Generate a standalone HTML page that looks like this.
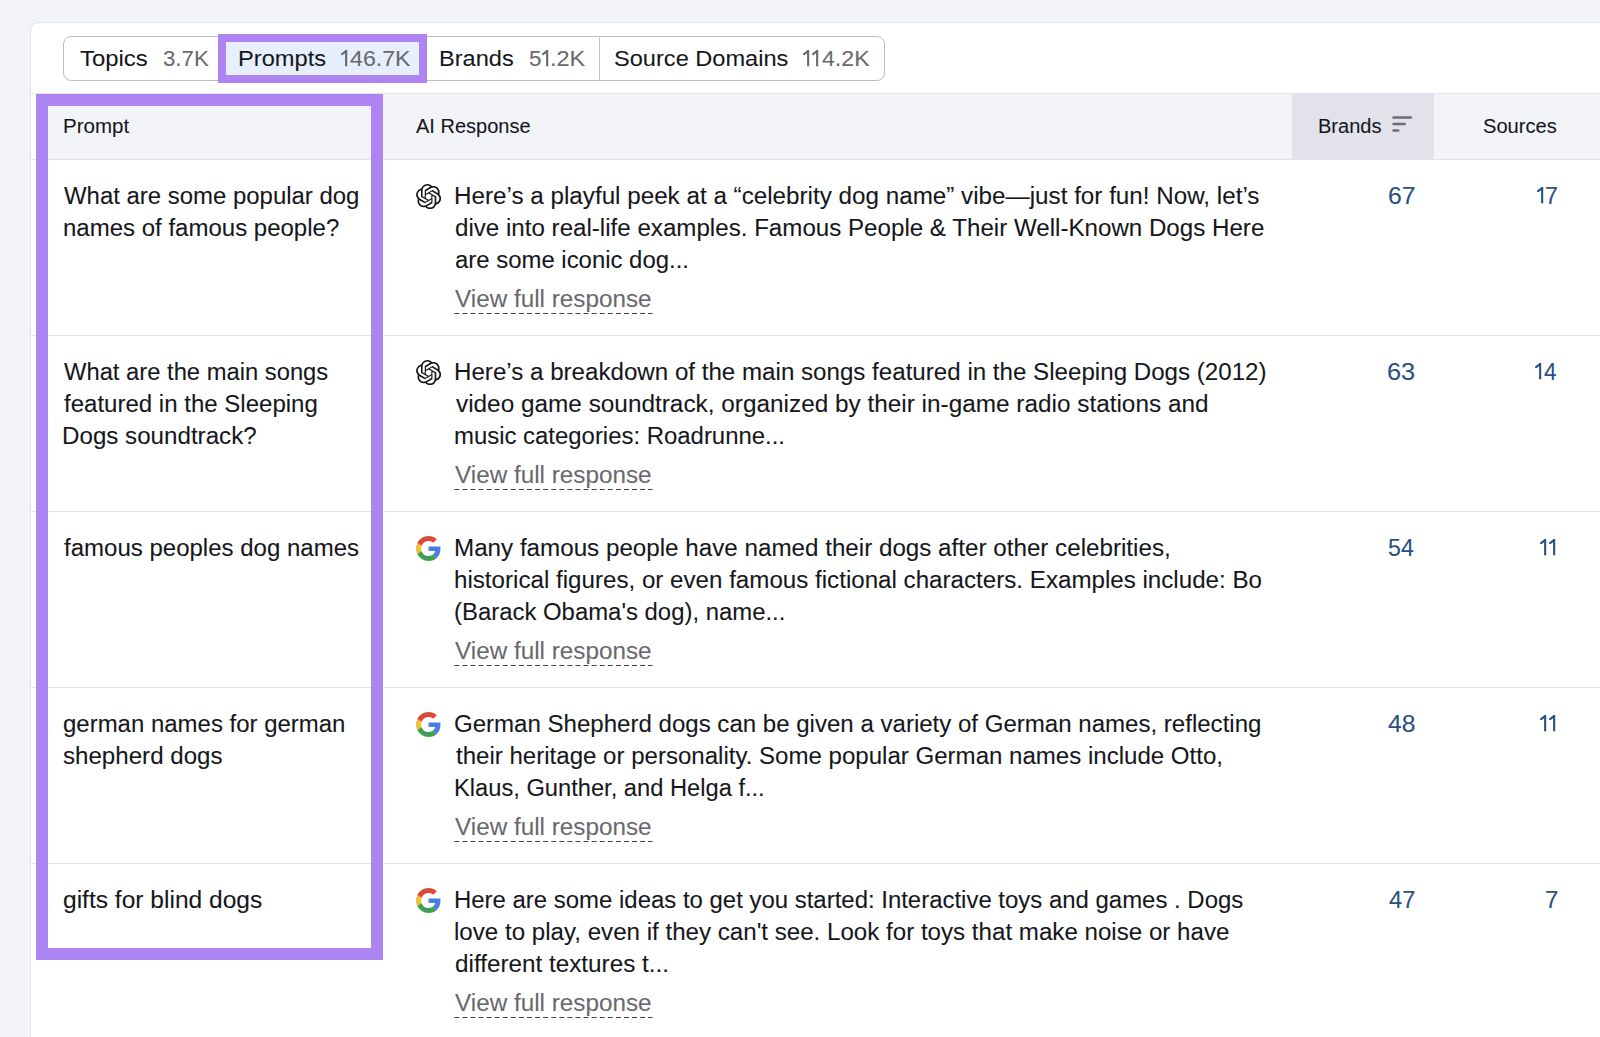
<!DOCTYPE html>
<html><head><meta charset="utf-8"><style>
html,body{margin:0;padding:0}
body{width:1600px;height:1037px;overflow:hidden;position:relative;background:#f3f4f8;font-family:"Liberation Sans",sans-serif}
.a{position:absolute}
.t{position:absolute;white-space:pre;line-height:1;transform-origin:0 0;-webkit-text-stroke:0.08px currentColor}
</style></head><body>

<div class="a" style="left:30px;top:22px;width:1600px;height:1100px;background:#fff;border:1px solid #e2e3e9;border-radius:8px;box-sizing:border-box"></div>
<div class="a" style="left:63px;top:36px;width:822px;height:45px;border:1px solid #bdbec2;border-radius:8px;box-sizing:border-box"></div>
<div class="a" style="left:599px;top:37px;width:1px;height:43px;background:#c4c5c9"></div>
<div class="a" style="left:218px;top:34px;width:209px;height:49px;border:8px solid #ae84f3;box-sizing:border-box;background:#e6effb"></div>
<div class="a" style="left:31px;top:93px;width:1569px;height:67px;background:linear-gradient(90deg,#fff 0 5px,#f3f4f8 5px);border-top:1px solid #e2e3e9;border-bottom:1px solid #e2e3e9;box-sizing:border-box"></div>
<div class="a" style="left:1292px;top:94px;width:142px;height:65px;background:#e1e2ea"></div>
<svg class="a" style="left:1390px;top:114px" width="24" height="20" viewBox="0 0 24 20"><g stroke="#6b6c7b" stroke-width="2.6" stroke-linecap="round"><line x1="3.6" y1="3.5" x2="20.8" y2="3.5"/><line x1="3.6" y1="10" x2="14.6" y2="10"/><line x1="3.6" y1="16.5" x2="8.2" y2="16.5"/></g></svg>
<div class="a" style="left:31px;top:335px;width:1569px;height:1px;background:#e2e3e9"></div>
<div class="a" style="left:31px;top:511px;width:1569px;height:1px;background:#e2e3e9"></div>
<div class="a" style="left:31px;top:687px;width:1569px;height:1px;background:#e2e3e9"></div>
<div class="a" style="left:31px;top:863px;width:1569px;height:1px;background:#e2e3e9"></div>
<svg style="position:absolute;left:415.6px;top:183.6px" width="25.2" height="25.2" viewBox="0 0 24 24"><path fill="#16171c" d="M22.2819 9.8211a5.9847 5.9847 0 0 0-.5157-4.9108 6.0462 6.0462 0 0 0-6.5098-2.9A6.0651 6.0651 0 0 0 4.9807 4.1818a5.9847 5.9847 0 0 0-3.9977 2.9 6.0462 6.0462 0 0 0 .7427 7.0966 5.98 5.98 0 0 0 .511 4.9107 6.051 6.051 0 0 0 6.5146 2.9001A5.9847 5.9847 0 0 0 13.2599 24a6.0557 6.0557 0 0 0 5.7718-4.2058 5.9894 5.9894 0 0 0 3.9977-2.9001 6.0557 6.0557 0 0 0-.7475-7.0729zm-9.022 12.6081a4.4755 4.4755 0 0 1-2.8764-1.0408l.1419-.0804 4.7783-2.7582a.7948.7948 0 0 0 .3927-.6813v-6.7369l2.02 1.1686a.071.071 0 0 1 .038.052v5.5826a4.504 4.504 0 0 1-4.4945 4.4944zm-9.6607-4.1254a4.4708 4.4708 0 0 1-.5346-3.0137l.142.0852 4.783 2.7582a.7712.7712 0 0 0 .7806 0l5.8428-3.3685v2.3324a.0804.0804 0 0 1-.0332.0615L9.74 19.9502a4.4992 4.4992 0 0 1-6.1408-1.6464zM2.3408 7.8956a4.485 4.485 0 0 1 2.3655-1.9728V11.6a.7664.7664 0 0 0 .3879.6765l5.8144 3.3543-2.0201 1.1685a.0757.0757 0 0 1-.071 0l-4.8303-2.7865A4.504 4.504 0 0 1 2.3408 7.872zm16.5963 3.8558L13.1038 8.364 15.1192 7.2a.0757.0757 0 0 1 .071 0l4.8303 2.7913a4.4944 4.4944 0 0 1-.6765 8.1042v-5.6772a.79.79 0 0 0-.407-.667zm2.0107-3.0231l-.142-.0852-4.7735-2.7818a.7759.7759 0 0 0-.7854 0L9.409 9.2297V6.8974a.0662.0662 0 0 1 .0284-.0615l4.8303-2.7866a4.4992 4.4992 0 0 1 6.6802 4.66zM8.3065 12.863l-2.02-1.1638a.0804.0804 0 0 1-.038-.0567V6.0742a4.4992 4.4992 0 0 1 7.3757-3.4537l-.142.0805L8.704 5.459a.7948.7948 0 0 0-.3927.6813zm1.0976-2.3654l2.602-1.4998 2.6069 1.4998v2.9994l-2.5974 1.4997-2.6067-1.4997Z"/></svg>
<svg class="a" style="left:454px;top:312px" width="200" height="3"><line x1="0.3" y1="1.5" x2="198.5" y2="1.5" stroke="#3f4045" stroke-width="1.1" stroke-dasharray="4.9 3.18"/></svg>
<svg style="position:absolute;left:415.6px;top:359.6px" width="25.2" height="25.2" viewBox="0 0 24 24"><path fill="#16171c" d="M22.2819 9.8211a5.9847 5.9847 0 0 0-.5157-4.9108 6.0462 6.0462 0 0 0-6.5098-2.9A6.0651 6.0651 0 0 0 4.9807 4.1818a5.9847 5.9847 0 0 0-3.9977 2.9 6.0462 6.0462 0 0 0 .7427 7.0966 5.98 5.98 0 0 0 .511 4.9107 6.051 6.051 0 0 0 6.5146 2.9001A5.9847 5.9847 0 0 0 13.2599 24a6.0557 6.0557 0 0 0 5.7718-4.2058 5.9894 5.9894 0 0 0 3.9977-2.9001 6.0557 6.0557 0 0 0-.7475-7.0729zm-9.022 12.6081a4.4755 4.4755 0 0 1-2.8764-1.0408l.1419-.0804 4.7783-2.7582a.7948.7948 0 0 0 .3927-.6813v-6.7369l2.02 1.1686a.071.071 0 0 1 .038.052v5.5826a4.504 4.504 0 0 1-4.4945 4.4944zm-9.6607-4.1254a4.4708 4.4708 0 0 1-.5346-3.0137l.142.0852 4.783 2.7582a.7712.7712 0 0 0 .7806 0l5.8428-3.3685v2.3324a.0804.0804 0 0 1-.0332.0615L9.74 19.9502a4.4992 4.4992 0 0 1-6.1408-1.6464zM2.3408 7.8956a4.485 4.485 0 0 1 2.3655-1.9728V11.6a.7664.7664 0 0 0 .3879.6765l5.8144 3.3543-2.0201 1.1685a.0757.0757 0 0 1-.071 0l-4.8303-2.7865A4.504 4.504 0 0 1 2.3408 7.872zm16.5963 3.8558L13.1038 8.364 15.1192 7.2a.0757.0757 0 0 1 .071 0l4.8303 2.7913a4.4944 4.4944 0 0 1-.6765 8.1042v-5.6772a.79.79 0 0 0-.407-.667zm2.0107-3.0231l-.142-.0852-4.7735-2.7818a.7759.7759 0 0 0-.7854 0L9.409 9.2297V6.8974a.0662.0662 0 0 1 .0284-.0615l4.8303-2.7866a4.4992 4.4992 0 0 1 6.6802 4.66zM8.3065 12.863l-2.02-1.1638a.0804.0804 0 0 1-.038-.0567V6.0742a4.4992 4.4992 0 0 1 7.3757-3.4537l-.142.0805L8.704 5.459a.7948.7948 0 0 0-.3927.6813zm1.0976-2.3654l2.602-1.4998 2.6069 1.4998v2.9994l-2.5974 1.4997-2.6067-1.4997Z"/></svg>
<svg class="a" style="left:454px;top:488px" width="200" height="3"><line x1="0.3" y1="1.5" x2="198.5" y2="1.5" stroke="#3f4045" stroke-width="1.1" stroke-dasharray="4.9 3.18"/></svg>
<svg style="position:absolute;left:416px;top:536px" width="25" height="25" viewBox="0 0 48 48"><path fill="#dc4a3b" d="M24 9.5c3.54 0 6.71 1.22 9.21 3.6l6.85-6.85C35.9 2.38 30.47 0 24 0 14.62 0 6.51 5.38 2.56 13.22l7.98 6.19C12.43 13.72 17.74 9.5 24 9.5z"/><path fill="#4a7fe0" d="M46.98 24.55c0-1.57-.15-3.09-.38-4.55H24v9.02h12.94c-.58 2.96-2.26 5.48-4.78 7.18l7.73 6c4.51-4.18 7.09-10.36 7.09-17.65z"/><path fill="#f0bd3c" d="M10.53 28.59c-.48-1.45-.76-2.99-.76-4.59s.27-3.14.76-4.59l-7.98-6.19C.92 16.46 0 20.12 0 24c0 3.88.92 7.54 2.56 10.78l7.97-6.19z"/><path fill="#3f9f53" d="M24 48c6.48 0 11.93-2.13 15.89-5.81l-7.73-6c-2.15 1.45-4.92 2.3-8.16 2.3-6.26 0-11.57-4.22-13.47-9.91l-7.98 6.19C6.51 42.62 14.62 48 24 48z"/></svg>
<svg class="a" style="left:454px;top:664px" width="200" height="3"><line x1="0.3" y1="1.5" x2="198.5" y2="1.5" stroke="#3f4045" stroke-width="1.1" stroke-dasharray="4.9 3.18"/></svg>
<svg style="position:absolute;left:416px;top:712px" width="25" height="25" viewBox="0 0 48 48"><path fill="#dc4a3b" d="M24 9.5c3.54 0 6.71 1.22 9.21 3.6l6.85-6.85C35.9 2.38 30.47 0 24 0 14.62 0 6.51 5.38 2.56 13.22l7.98 6.19C12.43 13.72 17.74 9.5 24 9.5z"/><path fill="#4a7fe0" d="M46.98 24.55c0-1.57-.15-3.09-.38-4.55H24v9.02h12.94c-.58 2.96-2.26 5.48-4.78 7.18l7.73 6c4.51-4.18 7.09-10.36 7.09-17.65z"/><path fill="#f0bd3c" d="M10.53 28.59c-.48-1.45-.76-2.99-.76-4.59s.27-3.14.76-4.59l-7.98-6.19C.92 16.46 0 20.12 0 24c0 3.88.92 7.54 2.56 10.78l7.97-6.19z"/><path fill="#3f9f53" d="M24 48c6.48 0 11.93-2.13 15.89-5.81l-7.73-6c-2.15 1.45-4.92 2.3-8.16 2.3-6.26 0-11.57-4.22-13.47-9.91l-7.98 6.19C6.51 42.62 14.62 48 24 48z"/></svg>
<svg class="a" style="left:454px;top:840px" width="200" height="3"><line x1="0.3" y1="1.5" x2="198.5" y2="1.5" stroke="#3f4045" stroke-width="1.1" stroke-dasharray="4.9 3.18"/></svg>
<svg style="position:absolute;left:416px;top:888px" width="25" height="25" viewBox="0 0 48 48"><path fill="#dc4a3b" d="M24 9.5c3.54 0 6.71 1.22 9.21 3.6l6.85-6.85C35.9 2.38 30.47 0 24 0 14.62 0 6.51 5.38 2.56 13.22l7.98 6.19C12.43 13.72 17.74 9.5 24 9.5z"/><path fill="#4a7fe0" d="M46.98 24.55c0-1.57-.15-3.09-.38-4.55H24v9.02h12.94c-.58 2.96-2.26 5.48-4.78 7.18l7.73 6c4.51-4.18 7.09-10.36 7.09-17.65z"/><path fill="#f0bd3c" d="M10.53 28.59c-.48-1.45-.76-2.99-.76-4.59s.27-3.14.76-4.59l-7.98-6.19C.92 16.46 0 20.12 0 24c0 3.88.92 7.54 2.56 10.78l7.97-6.19z"/><path fill="#3f9f53" d="M24 48c6.48 0 11.93-2.13 15.89-5.81l-7.73-6c-2.15 1.45-4.92 2.3-8.16 2.3-6.26 0-11.57-4.22-13.47-9.91l-7.98 6.19C6.51 42.62 14.62 48 24 48z"/></svg>
<svg class="a" style="left:454px;top:1016px" width="200" height="3"><line x1="0.3" y1="1.5" x2="198.5" y2="1.5" stroke="#3f4045" stroke-width="1.1" stroke-dasharray="4.9 3.18"/></svg>
<div class="t" style="left:80.00px;top:48.00px;font-size:22.5px;transform:scaleX(1.0626);color:#16171c">Topics</div>
<div class="t" style="left:163.00px;top:48.00px;font-size:22.5px;transform:scaleX(0.9886);color:#68696f">3.7K</div>
<div class="t" style="left:237.70px;top:48.00px;font-size:22.5px;transform:scaleX(1.0513);color:#16171c">Prompts</div>
<div class="t" style="left:349.75px;top:48.00px;font-size:22.5px;transform:scaleX(1.0291);color:#68696f">46.7K</div>
<div class="t" style="left:438.95px;top:48.00px;font-size:22.5px;transform:scaleX(1.0480);color:#16171c">Brands</div>
<div class="t" style="left:528.90px;top:48.00px;font-size:22.5px;letter-spacing:-1.700px;color:#68696f">5</div>
<div class="t" style="left:549.71px;top:48.00px;font-size:22.5px;transform:scaleX(1.0452);color:#68696f">.2K</div>
<div class="t" style="left:613.85px;top:48.00px;font-size:22.5px;transform:scaleX(1.0486);color:#16171c">Source Domains</div>
<div class="t" style="left:822.00px;top:48.00px;font-size:22.5px;transform:scaleX(1.0286);color:#68696f">4.2K</div>
<div class="t" style="left:62.95px;top:117.00px;font-size:19.5px;transform:scaleX(1.0523);color:#16171c">Prompt</div>
<div class="t" style="left:416.00px;top:117.00px;font-size:19.5px;transform:scaleX(1.0261);color:#16171c">AI Response</div>
<div class="t" style="left:1317.77px;top:117.00px;font-size:19.5px;transform:scaleX(1.0273);color:#16171c">Brands</div>
<div class="t" style="left:1483.00px;top:117.00px;font-size:19.5px;transform:scaleX(1.0309);color:#16171c">Sources</div>
<div class="t" style="left:64.00px;top:185.00px;font-size:23px;transform:scaleX(1.0409);color:#16171c">What are some popular dog</div>
<div class="t" style="left:62.96px;top:217.00px;font-size:23px;transform:scaleX(1.0438);color:#16171c">names of famous people?</div>
<div class="t" style="left:454.45px;top:185.00px;font-size:23px;transform:scaleX(1.0530);color:#16171c">Here’s a playful peek at a “celebrity dog name” vibe—just for fun! Now, let’s</div>
<div class="t" style="left:454.60px;top:217.00px;font-size:23px;transform:scaleX(1.0493);color:#16171c">dive into real-life examples. Famous People &amp; Their Well-Known Dogs Here</div>
<div class="t" style="left:454.60px;top:249.00px;font-size:23px;transform:scaleX(1.0397);color:#16171c">are some iconic dog...</div>
<div class="t" style="left:454.50px;top:288.00px;font-size:23px;transform:scaleX(1.0556);color:#68696f">View full response</div>
<div class="t" style="left:64.00px;top:361.00px;font-size:23px;transform:scaleX(1.0334);color:#16171c">What are the main songs</div>
<div class="t" style="left:64.00px;top:393.00px;font-size:23px;transform:scaleX(1.0447);color:#16171c">featured in the Sleeping</div>
<div class="t" style="left:62.35px;top:425.00px;font-size:23px;transform:scaleX(1.0502);color:#16171c">Dogs soundtrack?</div>
<div class="t" style="left:454.45px;top:361.00px;font-size:23px;transform:scaleX(1.0493);color:#16171c">Here’s a breakdown of the main songs featured in the Sleeping Dogs (2012)</div>
<div class="t" style="left:455.50px;top:393.00px;font-size:23px;transform:scaleX(1.0586);color:#16171c">video game soundtrack, organized by their in-game radio stations and</div>
<div class="t" style="left:454.46px;top:425.00px;font-size:23px;transform:scaleX(1.0398);color:#16171c">music categories: Roadrunne...</div>
<div class="t" style="left:454.50px;top:464.00px;font-size:23px;transform:scaleX(1.0556);color:#68696f">View full response</div>
<div class="t" style="left:64.00px;top:537.00px;font-size:23px;transform:scaleX(1.0441);color:#16171c">famous peoples dog names</div>
<div class="t" style="left:454.45px;top:537.00px;font-size:23px;transform:scaleX(1.0518);color:#16171c">Many famous people have named their dogs after other celebrities,</div>
<div class="t" style="left:454.45px;top:569.00px;font-size:23px;transform:scaleX(1.0499);color:#16171c">historical figures, or even famous fictional characters. Examples include: Bo</div>
<div class="t" style="left:454.46px;top:601.00px;font-size:23px;transform:scaleX(1.0393);color:#16171c">(Barack Obama's dog), name...</div>
<div class="t" style="left:454.50px;top:640.00px;font-size:23px;transform:scaleX(1.0556);color:#68696f">View full response</div>
<div class="t" style="left:63.40px;top:713.00px;font-size:23px;transform:scaleX(1.0421);color:#16171c">german names for german</div>
<div class="t" style="left:63.40px;top:745.00px;font-size:23px;transform:scaleX(1.0483);color:#16171c">shepherd dogs</div>
<div class="t" style="left:454.45px;top:713.00px;font-size:23px;transform:scaleX(1.0456);color:#16171c">German Shepherd dogs can be given a variety of German names, reflecting</div>
<div class="t" style="left:455.50px;top:745.00px;font-size:23px;transform:scaleX(1.0458);color:#16171c">their heritage or personality. Some popular German names include Otto,</div>
<div class="t" style="left:454.47px;top:777.00px;font-size:23px;transform:scaleX(1.0297);color:#16171c">Klaus, Gunther, and Helga f...</div>
<div class="t" style="left:454.50px;top:816.00px;font-size:23px;transform:scaleX(1.0556);color:#68696f">View full response</div>
<div class="t" style="left:63.40px;top:889.00px;font-size:23px;transform:scaleX(1.0676);color:#16171c">gifts for blind dogs</div>
<div class="t" style="left:454.46px;top:889.00px;font-size:23px;transform:scaleX(1.0411);color:#16171c">Here are some ideas to get you started: Interactive toys and games . Dogs</div>
<div class="t" style="left:454.45px;top:921.00px;font-size:23px;transform:scaleX(1.0491);color:#16171c">love to play, even if they can't see. Look for toys that make noise or have</div>
<div class="t" style="left:454.60px;top:953.00px;font-size:23px;transform:scaleX(1.0548);color:#16171c">different textures t...</div>
<div class="t" style="left:454.50px;top:992.00px;font-size:23px;transform:scaleX(1.0556);color:#68696f">View full response</div>
<div class="t" style="left:1387.67px;top:185.00px;font-size:23px;transform:scaleX(1.0781);color:#28517f">67</div>
<div class="t" style="left:1386.65px;top:361.00px;font-size:23px;transform:scaleX(1.1033);color:#28517f">63</div>
<div class="t" style="left:1387.75px;top:537.00px;font-size:23px;transform:scaleX(1.0081);color:#28517f">54</div>
<div class="t" style="left:1387.50px;top:713.00px;font-size:23px;transform:scaleX(1.0689);color:#28517f">48</div>
<div class="t" style="left:1388.50px;top:889.00px;font-size:23px;transform:scaleX(1.0286);color:#28517f">47</div>
<div class="t" style="left:1544.99px;top:185.00px;font-size:23px;transform:scaleX(1.0091);color:#28517f">7</div>
<div class="t" style="left:1544.20px;top:361.00px;font-size:23px;transform:scaleX(0.9769);color:#28517f">4</div>
<div class="t" style="left:1544.55px;top:889.00px;font-size:23px;transform:scaleX(1.0455);color:#28517f">7</div>
<svg class="a" style="left:1536.20px;top:186.10px" width="10" height="20" viewBox="0 0 10 20"><path d="M2,5.2 L6.1,2.1" stroke="#28517f" stroke-width="2.1" stroke-linecap="round" fill="none"/><rect x="5.1" y="1" width="2.1" height="16.3" fill="#28517f"/></svg>
<svg class="a" style="left:1533.80px;top:362.10px" width="10" height="20" viewBox="0 0 10 20"><path d="M2,5.2 L6.1,2.1" stroke="#28517f" stroke-width="2.1" stroke-linecap="round" fill="none"/><rect x="5.1" y="1" width="2.1" height="16.3" fill="#28517f"/></svg>
<svg class="a" style="left:1538.90px;top:538.10px" width="10" height="20" viewBox="0 0 10 20"><path d="M2,5.2 L6.1,2.1" stroke="#28517f" stroke-width="2.1" stroke-linecap="round" fill="none"/><rect x="5.1" y="1" width="2.1" height="16.3" fill="#28517f"/></svg>
<svg class="a" style="left:1548.30px;top:538.10px" width="10" height="20" viewBox="0 0 10 20"><path d="M2,5.2 L6.1,2.1" stroke="#28517f" stroke-width="2.1" stroke-linecap="round" fill="none"/><rect x="5.1" y="1" width="2.1" height="16.3" fill="#28517f"/></svg>
<svg class="a" style="left:1538.90px;top:714.10px" width="10" height="20" viewBox="0 0 10 20"><path d="M2,5.2 L6.1,2.1" stroke="#28517f" stroke-width="2.1" stroke-linecap="round" fill="none"/><rect x="5.1" y="1" width="2.1" height="16.3" fill="#28517f"/></svg>
<svg class="a" style="left:1548.30px;top:714.10px" width="10" height="20" viewBox="0 0 10 20"><path d="M2,5.2 L6.1,2.1" stroke="#28517f" stroke-width="2.1" stroke-linecap="round" fill="none"/><rect x="5.1" y="1" width="2.1" height="16.3" fill="#28517f"/></svg>
<svg class="a" style="left:340.00px;top:48.70px" width="10" height="20" viewBox="0 0 10 20"><path d="M2,5.2 L6.1,2.1" stroke="#68696f" stroke-width="2.1" stroke-linecap="round" fill="none"/><rect x="5.1" y="1" width="2.1" height="16.3" fill="#68696f"/></svg>
<svg class="a" style="left:541.10px;top:48.70px" width="10" height="20" viewBox="0 0 10 20"><path d="M2,5.2 L6.1,2.1" stroke="#68696f" stroke-width="2.1" stroke-linecap="round" fill="none"/><rect x="5.1" y="1" width="2.1" height="16.3" fill="#68696f"/></svg>
<svg class="a" style="left:802.00px;top:48.70px" width="10" height="20" viewBox="0 0 10 20"><path d="M2,5.2 L6.1,2.1" stroke="#68696f" stroke-width="2.1" stroke-linecap="round" fill="none"/><rect x="5.1" y="1" width="2.1" height="16.3" fill="#68696f"/></svg>
<svg class="a" style="left:811.40px;top:48.70px" width="10" height="20" viewBox="0 0 10 20"><path d="M2,5.2 L6.1,2.1" stroke="#68696f" stroke-width="2.1" stroke-linecap="round" fill="none"/><rect x="5.1" y="1" width="2.1" height="16.3" fill="#68696f"/></svg>
<div class="a" style="left:36px;top:94px;width:347px;height:866px;border:12px solid #ae84f3;box-sizing:border-box"></div>
</body></html>
